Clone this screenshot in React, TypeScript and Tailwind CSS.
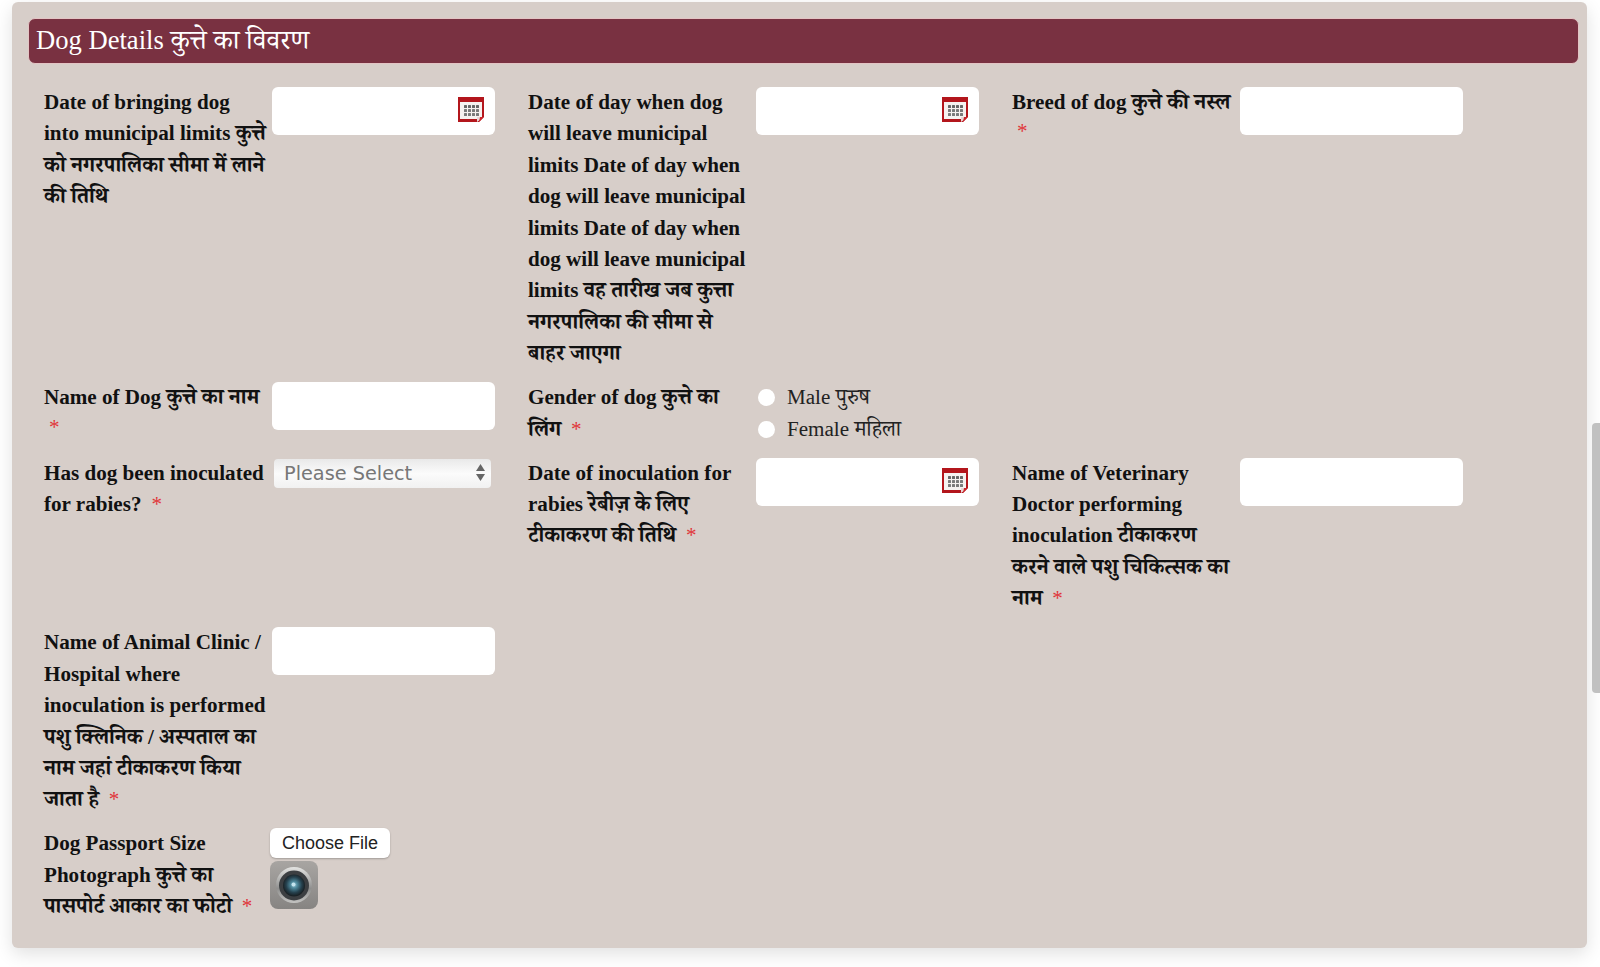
const serif = 'font-["Liberation_Serif","Noto_Serif_Devanagari","Noto_Sans_Devanagari","Noto_Sans",serif]';

// devanagari runs come out a touch narrow next to the latin font
function withHindi(text: string) {
  return text.split(/([\u0900-\u097F]+(?: +[\u0900-\u097F]+)*)/).map((part, i) =>
    i % 2 === 1 ? (
      <span key={i} className="text-[1.02em]">
        {part}
      </span>
    ) : (
      part
    ),
  );
}

function CalendarIcon() {
  return (
    <svg className="absolute right-[11px] top-[10px] h-[25px] w-[26px]" viewBox="0 0 26 25">
      <path d="M0 0h26v20l-5 5H0z" fill="#b3161c" />
      <rect x="2" y="5" width="22" height="17" fill="#f6f2f0" />
      <path d="M19 25v-5h7z" fill="#e8d6d6" />
      <path d="M21 25l5-5h-4z" fill="#c9252b" />
      {[0, 1, 2].map((r) =>
        [0, 1, 2, 3].map((c) => (
          <rect key={`${r}-${c}`} x={6 + c * 4} y={8 + r * 4} width="3" height="3" rx="0.5" fill={r === 0 ? '#666' : '#7a7a7a'} />
        )),
      )}
    </svg>
  );
}

function CameraIcon() {
  return (
    <svg className="h-[48px] w-[48px]" viewBox="0 0 48 48">
      <defs>
        <linearGradient id="body" x1="0" y1="0" x2="0" y2="1">
          <stop offset="0" stopColor="#a8a5a2" />
          <stop offset="1" stopColor="#868482" />
        </linearGradient>
        <linearGradient id="ring" x1="0" y1="0" x2="0" y2="1">
          <stop offset="0" stopColor="#e4e4e2" />
          <stop offset="0.6" stopColor="#8f8f8e" />
          <stop offset="1" stopColor="#c4c4c2" />
        </linearGradient>
        <radialGradient id="lens" cx="0.5" cy="0.47" r="0.5">
          <stop offset="0" stopColor="#9cc9d6" />
          <stop offset="0.3" stopColor="#4f8a9d" />
          <stop offset="0.7" stopColor="#26424f" />
          <stop offset="1" stopColor="#1a2226" />
        </radialGradient>
      </defs>
      <rect width="48" height="48" rx="8" fill="url(#body)" />
      <circle cx="24" cy="24" r="18" fill="url(#ring)" />
      <circle cx="24" cy="24.5" r="15" fill="#3c3f42" />
      <circle cx="24" cy="24.5" r="11" fill="url(#lens)" />
      <circle cx="23.5" cy="23.5" r="2" fill="#c4e4ee" />
    </svg>
  );
}

function Label({ text, star = 'inline' }: { text: string; star?: 'inline' | 'below' | 'none' }) {
  return (
    <label className="w-[228px] shrink-0 whitespace-pre font-bold text-[#111]">
      {withHindi(text)}
      {star === 'inline' && <span className="ml-[10px] font-normal text-[#e0353a]">*</span>}
      {star === 'below' && <span className="-mt-[2px] ml-[5px] block font-normal text-[#e0353a]">*</span>}
    </label>
  );
}

function TextField({ calendar }: { calendar?: boolean }) {
  return (
    <div className="relative h-[48px] w-[223px] shrink-0">
      <input type="text" className="h-full w-full rounded-[6px] bg-white outline-none" />
      {calendar && <CalendarIcon />}
    </div>
  );
}

function Field({ label, star, calendar }: { label: string; star?: 'inline' | 'below' | 'none'; calendar?: boolean }) {
  return (
    <div className="flex">
      <Label text={label} star={star} />
      <TextField calendar={calendar} />
    </div>
  );
}

export default function App() {
  return (
    <div className="min-h-[967px] bg-white pt-[2px]">
      <div className={`ml-[12px] h-[946px] w-[1575px] rounded-[6px] bg-[#d7cec9] pr-[8px] pl-[16px] pt-[16px] shadow-[0_6px_18px_rgba(0,0,0,0.12)] ${serif} text-[21.1px] leading-[31.4px]`}>
        <div className="flex h-[46px] items-center rounded-[7px] border border-[#e3c4c4] bg-[#793141] pl-[7px] text-[26.6px] text-white">
          <span className="whitespace-pre">{withHindi('Dog Details कुत्ते का विवरण')}</span>
        </div>
        <div className="mt-[23px] grid grid-cols-[484px_484px_484px] gap-y-[12.6px] pl-[16px]">
          <Field label={'Date of bringing dog\ninto municipal limits कुत्ते\nको नगरपालिका सीमा में लाने\nकी तिथि'} star="none" calendar />
          <Field
            label={'Date of day when dog\nwill leave municipal\nlimits Date of day when\ndog will leave municipal\nlimits Date of day when\ndog will leave municipal\nlimits वह तारीख जब कुत्ता\nनगरपालिका की सीमा से\nबाहर जाएगा'}
            star="none"
            calendar
          />
          <Field label="Breed of dog कुत्ते की नस्ल" star="below" />

          <Field label="Name of Dog कुत्ते का नाम" star="below" />
          <div className="flex">
            <Label text={'Gender of dog कुत्ते का\nलिंग'} />
            <div className="flex flex-col text-[#222]">
              {['Male पुरुष', 'Female महिला'].map((g) => (
                <label key={g} className="flex items-center whitespace-pre">
                  <input type="radio" name="gender" className="mr-[12px] ml-[2px] size-[17px] appearance-none rounded-full bg-white" />
                  <span>{withHindi(g)}</span>
                </label>
              ))}
            </div>
          </div>
          <div />

          <div className="flex">
            <Label text={'Has dog been inoculated\nfor rabies?'} />
            <div className="relative ml-[2px] h-[29px] w-[217px]">
              <select className="h-full w-full appearance-none rounded-[4px] bg-gradient-to-b from-[#e9e9e9] via-[#fbfbfb] to-[#f1f1f1] pl-[10px] font-['DejaVu_Sans',sans-serif] text-[19.3px] leading-[29px] text-[#777] outline-none">
                <option>Please Select</option>
              </select>
              <svg className="absolute right-[6px] top-[6px] h-[17px] w-[9px]" viewBox="0 0 9 17">
                <path d="M4.5 0L9 7H0z" fill="#666" />
                <path d="M4.5 17L0 10h9z" fill="#666" />
              </svg>
            </div>
          </div>
          <Field label={'Date of inoculation for\nrabies रेबीज़ के लिए\nटीकाकरण की तिथि'} calendar />
          <Field label={'Name of Veterinary\nDoctor performing\ninoculation टीकाकरण\nकरने वाले पशु चिकित्सक का\nनाम'} />

          <Field label={'Name of Animal Clinic /\nHospital where\ninoculation is performed\nपशु क्लिनिक / अस्पताल का\nनाम जहां टीकाकरण किया\nजाता है'} />
          <div />
          <div />

          <div className="flex">
            <Label text={'Dog Passport Size\nPhotograph कुत्ते का\nपासपोर्ट आकार का फोटो'} />
            <div className="-ml-[2px] flex flex-col items-start gap-[3px]">
              <button className="h-[30px] w-[120px] rounded-[6px] bg-white font-['Liberation_Sans',sans-serif] text-[18px] leading-[30px] text-[#222] shadow-[0_1px_2px_rgba(0,0,0,0.25)]">
                Choose File
              </button>
              <CameraIcon />
            </div>
          </div>
        </div>
      </div>
      <div className="absolute right-0 top-[423px] h-[270px] w-[8px] rounded-l-[4px] bg-[#c1c1c1]" />
    </div>
  );
}
